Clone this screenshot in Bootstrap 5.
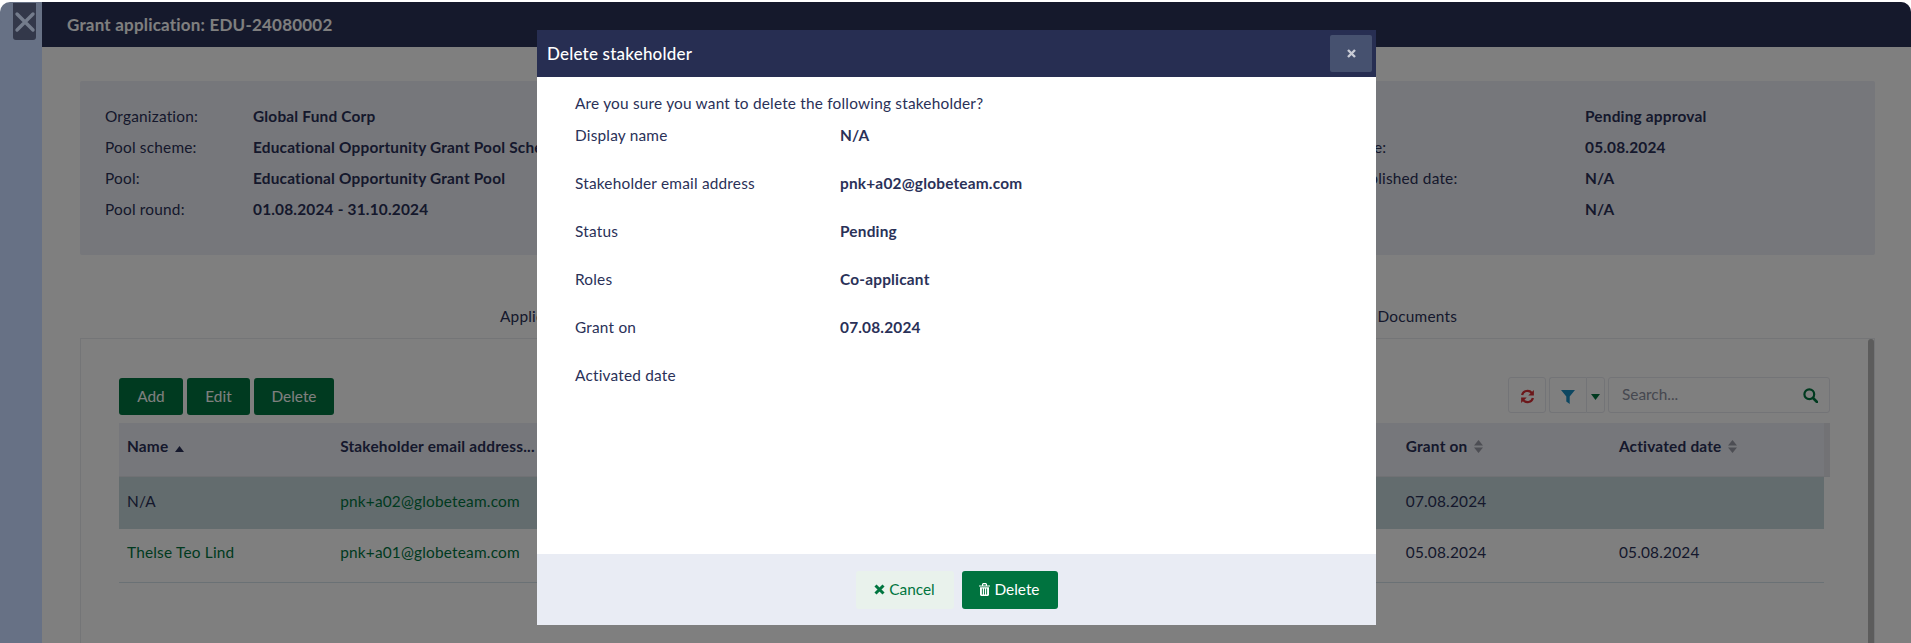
<!DOCTYPE html>
<html lang="en"><head><meta charset="utf-8"><title>Grant application</title>
<link href="https://cdn.jsdelivr.net/npm/bootstrap@5.3.0/dist/css/bootstrap.min.css" rel="stylesheet">
<style>
html,body{height:100%;overflow:hidden;background:#fff}
body{font-family:"Lato","Liberation Sans",sans-serif;font-size:15.4px;color:#2a3158;letter-spacing:.2px}
.app-window{height:641px;margin-top:2px;border-radius:10px 10px 0 0;overflow:hidden;position:relative}
.app-side{width:42px;background:#677185;flex:none;padding-left:13px}
.app-side-btn{width:23px;height:37px;background:#33384a;border-radius:0 0 3px 3px;margin-top:1px;border:0;padding:0}
.app-main{flex:1 1 auto;position:relative;min-width:0;background:#fff}
.app-bar{height:45px;background:#2a3258;color:#fff;padding-left:25px;font-size:17px;font-weight:700}
.info-box{margin:34px 36px 0 38px;height:174px;background:#edeef6;padding:20px 25px;border-radius:2px}
.info-line{height:31px;line-height:31px;white-space:nowrap}
.info-lab{width:148px;flex:none}.info-lab-r{width:316px;flex:none}
.info-val{font-weight:700}
.info-right{margin-left:auto;width:581px;flex:none}
.tab-strip{margin:0 36px 0 0;padding:0 418px 0 458px;height:83px;align-items:end}
.tab-strip .nav-link{padding:0 0 10px;color:#2a3158}
.tab-panel{margin:0 36px 0 38px;height:400px;border:1px solid #e8ebef;padding:38px 44px 0 38px;position:relative}
.tab-scroll{position:absolute;right:0;top:0;bottom:0;width:6px;background:#b8b8b8;border-radius:3px}
.act-group{margin-top:1px}
.act-btn{background:#007540;color:#fff;border:0;height:37px;border-radius:3px;font-size:15.4px;padding:0;--bs-btn-hover-bg:#007540;--bs-btn-hover-color:#fff}
.act-add{width:64px}.act-edit{width:63px}.act-del{width:80px}
.tool-btn{height:36px;border:1px solid #e6e8ee;border-radius:3px;background:#fff}
.tool-refresh{width:38px;margin-right:3px}
.tool-filter{width:37px;border-radius:3px 0 0 3px;border-right:0}.tool-caret{width:19px;border-radius:0 3px 3px 0;margin-right:3px}
.search-group{width:222px;height:36px;border:1px solid #e6e8ee;border-radius:3px;padding:0 11px 0 13px}
.search-input{border:0;padding:0;font-size:15.4px;min-width:0;box-shadow:none;color:#2a3158;background:transparent}
.search-input::placeholder{color:#8c90a0}
.grid-tbl{table-layout:fixed;width:1711px;margin:8px 0 0;--bs-table-bg:transparent;--bs-table-color:#2a3158;border-collapse:collapse}
.grid-tbl th,.grid-tbl td{padding:12px 8px;vertical-align:top;white-space:nowrap;overflow:hidden;text-overflow:ellipsis;border:0;line-height:22px}
.grid-tbl col{width:213.125px}.grid-tbl col.gut-col{width:6px}
.grid-tbl thead tr{height:53px;background:#edeef6;border-bottom:1px solid #e0e2e8}
.grid-tbl th{font-weight:700}
.grid-tbl th.gut-cell{background:#e4e5ea;padding:0}
.grid-tbl tbody tr{height:53px}
.grid-tbl tbody tr.row-sel td{padding-top:13px}
.grid-tbl tbody tr.row-sel td:not(.gut-cell){background:#c6d8dc}
.grid-tbl tbody tr.row-line td:not(.gut-cell){border-bottom:1px solid #d5e2ea}
.grid-tbl td a,.grid-tbl td.green-txt{color:#00753f;text-decoration:none}
.sort-ico{margin-left:3px;vertical-align:0}
.sort-ico-two{margin-left:3px;vertical-align:-1px}
.dim-layer{position:absolute;inset:0;background:rgba(0,0,0,.5)}
.del-modal{position:absolute;left:495px;top:28px;width:839px;height:595px;background:#fff;display:flex;flex-direction:column}
.del-head{height:47px;background:#272e52;color:#fff;padding:1px 4px 0 10px;font-size:17px;font-weight:500;flex:none}
.del-x{width:42px;height:37px;background:#46516f;border:0;border-radius:2px;padding:0;margin-top:-1px}
.del-body{flex:1 1 auto;padding:15px 0 0 38px}
.del-q{line-height:22px;height:22px;margin-bottom:10px}
.del-row{height:48px;line-height:22px}
.del-lab{width:265px;flex:none}
.del-val{font-weight:700}
.del-foot{height:71px;background:#e9ecf4;gap:8px;flex:none}
.foot-btn{height:38px;border-radius:3px;border:0;font-size:15.4px;padding:0;display:inline-flex;align-items:center;justify-content:center;gap:4px}
.foot-cancel{width:98px;background:#e9f2ec;color:#00753f}
.foot-del{width:96px;background:#00733f;color:#fff}
</style></head>
<body>
<div class="app-window d-flex">
  <div class="app-side">
    <button class="app-side-btn d-flex align-items-center justify-content-center" aria-label="Close">
      <svg width="22" height="22" viewBox="0 0 22 22"><path d="M3 3 19 19M19 3 3 19" stroke="#747c8c" stroke-width="3.4" stroke-linecap="round"/></svg>
    </button>
  </div>
  <div class="app-main">
    <div class="app-bar d-flex align-items-center">Grant application: EDU-24080002</div>
    <div class="info-box d-flex">
      <div>
        <div class="info-line d-flex"><span class="info-lab">Organization:</span><span class="info-val">Global Fund Corp</span></div>
        <div class="info-line d-flex"><span class="info-lab">Pool scheme:</span><span class="info-val">Educational Opportunity Grant Pool Scheme</span></div>
        <div class="info-line d-flex"><span class="info-lab">Pool:</span><span class="info-val">Educational Opportunity Grant Pool</span></div>
        <div class="info-line d-flex"><span class="info-lab">Pool round:</span><span class="info-val">01.08.2024 - 31.10.2024</span></div>
      </div>
      <div class="info-right">
        <div class="info-line d-flex"><span class="info-lab-r">Status:</span><span class="info-val">Pending approval</span></div>
        <div class="info-line d-flex"><span class="info-lab-r">Application date:</span><span class="info-val">05.08.2024</span></div>
        <div class="info-line d-flex"><span class="info-lab-r">Application published date:</span><span class="info-val">N/A</span></div>
        <div class="info-line d-flex"><span class="info-lab-r">Amount:</span><span class="info-val">N/A</span></div>
      </div>
    </div>
    <ul class="nav tab-strip justify-content-between">
      <li class="nav-item"><a class="nav-link" href="#">Application</a></li>
      <li class="nav-item"><a class="nav-link" href="#">Stakeholders</a></li>
      <li class="nav-item"><a class="nav-link" href="#">Documents</a></li>
    </ul>
    <div class="tab-panel">
      <div class="d-flex justify-content-between">
        <div class="d-flex gap-1 act-group">
          <button class="btn act-btn act-add">Add</button><button class="btn act-btn act-edit">Edit</button><button class="btn act-btn act-del">Delete</button>
        </div>
        <div class="d-flex">
          <button class="tool-btn tool-refresh p-0" aria-label="Refresh"><svg width="15" height="15" viewBox="0 0 16 16" fill="none"><path d="M2.2 6.4A6 6 0 0 1 12.6 4.2" stroke="#d92f35" stroke-width="2.4"/><path d="M14.8 1v6h-6z" fill="#d92f35"/><path d="M13.8 9.6A6 6 0 0 1 3.4 11.8" stroke="#d92f35" stroke-width="2.4"/><path d="M1.2 15V9h6z" fill="#d92f35"/></svg></button>
          <button class="tool-btn tool-filter p-0" aria-label="Filter"><svg width="14" height="14" viewBox="0 0 14 14"><path d="M0 0h14L8.7 6.4V14L5.3 11.4V6.4z" fill="#1b8ec2"/></svg></button>
          <button class="tool-btn tool-caret p-0" aria-label="More"><svg width="9" height="6" viewBox="0 0 9 6"><path d="M0 0h9L4.5 6z" fill="#00753f"/></svg></button>
          <div class="search-group d-flex align-items-center">
            <input class="form-control search-input" type="text" placeholder="Search...">
            <svg class="flex-shrink-0" width="15" height="15" viewBox="0 0 15 15" fill="none"><circle cx="6.3" cy="6.3" r="4.9" stroke="#00753f" stroke-width="2.2"/><path d="M10 10 14 14" stroke="#00753f" stroke-width="2.6" stroke-linecap="round"/></svg>
          </div>
        </div>
      </div>
      <table class="table grid-tbl">
        <colgroup><col><col><col><col><col><col><col><col><col class="gut-col"></colgroup>
        <thead><tr>
          <th>Name <svg class="sort-ico" width="9" height="6" viewBox="0 0 9 6"><path d="M0 6h9L4.5 0z" fill="#2a3158"/></svg></th>
          <th>Stakeholder email address...</th><th>Status</th><th>Roles</th><th>Invited by</th><th>Invited on</th>
          <th>Grant on <svg class="sort-ico-two" width="9" height="13" viewBox="0 0 9 13"><path d="M0 5.4h9L4.5 0zM0 7.6h9L4.5 13z" fill="#9a9da8"/></svg></th>
          <th>Activated date <svg class="sort-ico-two" width="9" height="13" viewBox="0 0 9 13"><path d="M0 5.4h9L4.5 0zM0 7.6h9L4.5 13z" fill="#9a9da8"/></svg></th>
          <th class="gut-cell"></th>
        </tr></thead>
        <tbody>
          <tr class="row-sel"><td>N/A</td><td><a href="#">pnk+a02@globeteam.com</a></td><td>Pending</td><td>Co-applicant</td><td></td><td></td><td>07.08.2024</td><td></td><td class="gut-cell"></td></tr>
          <tr class="row-line"><td class="green-txt">Thelse Teo Lind</td><td><a href="#">pnk+a01@globeteam.com</a></td><td>Active</td><td>Applicant</td><td></td><td></td><td>05.08.2024</td><td>05.08.2024</td><td class="gut-cell"></td></tr>
        </tbody>
      </table>
      <div class="tab-scroll"></div>
    </div>
    <div class="dim-layer"></div>
    <div class="del-modal" role="dialog">
      <div class="del-head d-flex align-items-center justify-content-between">
        <span>Delete stakeholder</span>
        <button class="del-x d-flex align-items-center justify-content-center" aria-label="Close"><svg width="9" height="9" viewBox="0 0 9 9"><path d="M1 1 8 8M8 1 1 8" stroke="#c9ccd6" stroke-width="2.4"/></svg></button>
      </div>
      <div class="del-body">
        <div class="del-q">Are you sure you want to delete the following stakeholder?</div>
        <div class="del-row d-flex"><span class="del-lab">Display name</span><span class="del-val">N/A</span></div>
        <div class="del-row d-flex"><span class="del-lab">Stakeholder email address</span><span class="del-val">pnk+a02@globeteam.com</span></div>
        <div class="del-row d-flex"><span class="del-lab">Status</span><span class="del-val">Pending</span></div>
        <div class="del-row d-flex"><span class="del-lab">Roles</span><span class="del-val">Co-applicant</span></div>
        <div class="del-row d-flex"><span class="del-lab">Grant on</span><span class="del-val">07.08.2024</span></div>
        <div class="del-row d-flex"><span class="del-lab">Activated date</span><span class="del-val"></span></div>
      </div>
      <div class="del-foot d-flex align-items-center justify-content-center">
        <button class="foot-btn foot-cancel"><svg width="11" height="11" viewBox="0 0 11 11"><path d="M1.5 1.5 9.5 9.5M9.5 1.5 1.5 9.5" stroke="#00753f" stroke-width="3"/></svg>Cancel</button>
        <button class="foot-btn foot-del"><svg width="11" height="13" viewBox="0 0 11 13"><path d="M0 2.4h3V1L4 0h3l1 1v1.4h3v1.2H0zM4.2 2.4h2.6V1.2H4.2zM1 4.3h9V12l-1 1H2l-1-1z" fill="#fff"/><path d="M3.4 5.5v6M5.5 5.5v6M7.6 5.5v6" stroke="#00733f" stroke-width=".9"/></svg>Delete</button>
      </div>
    </div>
  </div>
</div>
<script src="https://cdn.jsdelivr.net/npm/bootstrap@5.3.0/dist/js/bootstrap.bundle.min.js"></script>
</body></html>
